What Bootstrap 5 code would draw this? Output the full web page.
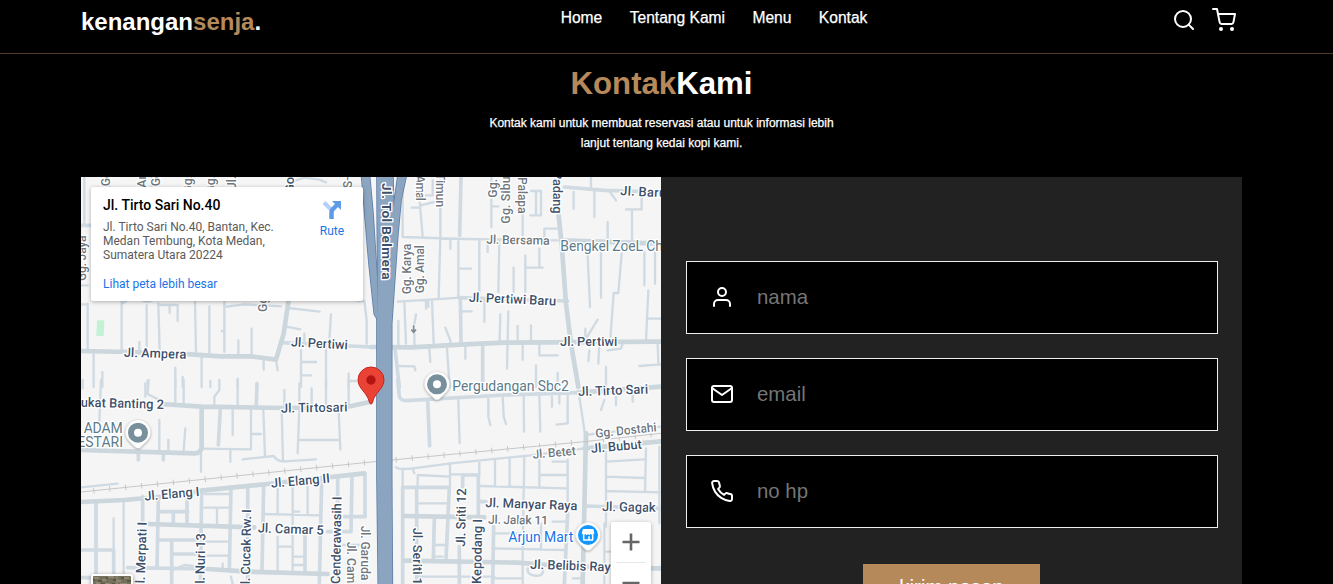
<!DOCTYPE html>
<html lang="id">
<head>
<meta charset="utf-8">
<meta name="viewport" content="width=device-width, initial-scale=1">
<title>Kenangan Senja</title>
<link rel="stylesheet" href="https://cdn.jsdelivr.net/npm/bootstrap@5.3.0/dist/css/bootstrap.min.css">
<style>
  body { background:#000; color:#fff; font-family:"Liberation Sans", Arial, sans-serif; height:100vh; overflow:hidden; }
  .topbar { height:54px; padding:0 91px 0 81px; border-bottom:1px solid #513c28; }
  .brand { font-size:24px; line-height:28px; font-weight:700; margin-top:8px; color:#fff; text-decoration:none; }
  .accent { color:#b6895b; }
  .menu { gap:27.400px; margin:8px 5px 0 0; }
  .menu a { color:#fff; text-decoration:none; font-size:15.600px; line-height:19px; -webkit-text-stroke:.25px #fff; }
  .tools { gap:16px; margin:8px 6px 0 0; }
  .feather { width:24px; height:24px; fill:none; stroke:#fff; stroke-width:2; stroke-linecap:round; stroke-linejoin:round; flex:none; display:block; }
  .contact { padding:0 91px 0 81px; }
  .contact h2 { font-size:31.200px; line-height:36px; font-weight:700; margin:12px 0 0; }
  .intro { font-size:12px; line-height:20px; width:360px; margin:11px auto 24px; -webkit-text-stroke:.25px #fff; }
  .panels { min-height:0; overflow:hidden; }
  .mapbox { width:580px; flex:none; position:relative; overflow:hidden; background:#f5f5f5; font-family:Roboto, sans-serif; }
  .mapbox > svg { width:580px; height:407px; display:block; }
  .place { position:absolute; left:10px; top:10px; width:272px; height:114px; padding:10px 12px; background:#fff; border-radius:2px; box-shadow:0 1px 4px rgba(0,0,0,.3); }
  .place h3 { font-size:14px; line-height:17px; font-weight:500; color:#000; margin:0 0 6px; }
  .place p { font-size:12px; line-height:14px; color:#5b5b5b; margin:0 0 15px; width:185px; }
  .place a { font-size:12px; line-height:14px; color:#1a73e8; text-decoration:none; display:block; }
  .place .route { position:absolute; left:226px; top:13px; width:30px; text-align:center; }
  .route svg { display:block; margin:0 auto 4px; }
  .zoomer { position:absolute; left:530px; top:345px; width:40px; height:81px; background:#fff; border-radius:2px; box-shadow:0 1px 4px rgba(0,0,0,.3); }
  .zoomer svg { display:block; }
  .aerial { position:absolute; left:10px; top:397px; width:42px; height:42px; border:2px solid #fff; border-radius:3px; box-shadow:0 1px 4px rgba(0,0,0,.4); overflow:hidden; }
  .aerial svg { display:block; }
  .formside { background:#222; padding:84px 24px 0 25px; }
  .field { flex:none; height:73px; border:1px solid #eee; background:#000; padding-left:23px; margin-bottom:24px; }
  .field .feather { margin-bottom:1.500px; }
  .field input { background:none; border:0; outline:0; color:#fff; font-size:20.400px; padding:0; margin-left:23px; }
  .field input::placeholder { color:#757575; opacity:1; }
  .send { flex:none; background:#b6895b; color:#fff; border:0; border-radius:0; font-size:20.400px; line-height:24px; width:177px; padding:11px 0 13px; margin:12px 1px 0 0; }
  .rd path { fill:none; stroke:#d0dae2; stroke-linecap:round; stroke-linejoin:round; }
  .rd .t { stroke-width:7; } .rd .m { stroke-width:11; } .rd .l { stroke-width:14; stroke:#cbd6dd; }
  .rail { fill:none; stroke:#c4c7c9; stroke-width:3; }
  .tick { fill:none; stroke:#c4c7c9; stroke-width:17; stroke-dasharray:3 45; }
  .lb text { font-size:39px; font-weight:500; fill:#3e516b; stroke:#fff; stroke-width:8; paint-order:stroke; stroke-linejoin:round; }
  .lb .n { fill:#6f767d; font-size:37px; }
  .lb .p { fill:#5c7b8a; font-weight:400; font-size:42px; }
  .lb .toll { font-size:41px; font-weight:700; }
</style>
</head>
<body class="d-flex flex-column">
<header class="topbar d-flex align-items-start justify-content-between flex-shrink-0">
  <a class="brand" href="#">kenangan<span class="accent">senja</span>.</a>
  <nav class="menu d-flex">
    <a href="#">Home</a><a href="#">Tentang Kami</a><a href="#">Menu</a><a href="#">Kontak</a>
  </nav>
  <div class="tools d-flex">
    <svg class="feather" viewBox="0 0 24 24"><circle cx="11" cy="11" r="8"/><path d="M21 21l-4.350-4.350"/></svg>
    <svg class="feather" viewBox="0 0 24 24"><circle cx="9" cy="21" r="1"/><circle cx="20" cy="21" r="1"/><path d="M1 1h4l2.680 13.390a2 2 0 0 0 2 1.610h9.720a2 2 0 0 0 2-1.610L23 6H6"/></svg>
  </div>
</header>

<main class="contact d-flex flex-column flex-grow-1 overflow-hidden">
  <h2 class="text-center"><span class="accent">Kontak</span>Kami</h2>
  <p class="intro text-center">Kontak kami untuk membuat reservasi atau untuk informasi lebih lanjut tentang kedai kopi kami.</p>
  <div class="panels d-flex flex-grow-1">
    <div class="mapbox">
      <svg viewBox="0 0 1740 1221">
        <!-- streets, one group per map quarter -->
        <g class="rd">
          <g>
            <path class="t" d="M10 0V140M85 0V30M212 0V30M320 0V30M400 0V30M640 12L670 2L715 8L735 16M20 380V515M0 382H20M0 325H20M122 375V520M122 380L135 373M180 368Q197 380 215 368M197 385V520M232 380L236 520M232 384H290V432M266 384V408M342 375L345 525M385 388V530M430 375V525M430 390L490 382L600 388M472 490V535M512 455V540M622 393L716 404M615 449L658 457M850 372L857 430V500M750 412L745 490M735 515V630M660 520V630M660 555H705M660 595H690M585 548L590 580M548 548V578M362 540V630M283 572V630M305 600V630M200 610V630M64 585V630M38 530V630M388 612V630M470 605V630M528 620V630M803 590V630M803 612H825M175 495V520M422 462h8M670 500V470M830 372H850"/>
            <path class="m" d="M600 497L870 510M0 145H30"/>
            <path class="l" d="M0 522L145 525L330 532L420 538H510L585 548L608 470L622 375"/>
          </g>
          <g transform="translate(870 0)">
            <path class="t" d="M95 0V180M140 0L155 180M150 85L190 75M122 92h25M185 10V55H165M208 0V180L203 360M95 180L280 186L560 190M238 190V215M262 190V360M262 275H300M325 190V345M385 190L382 345M361 0V150M365 88H382M455 100V175M480 42H510V115H478M495 42V112M520 180V155H560M350 200V225M505 215V272M463 235V345M463 272H515M428 272V345M608 45V95M670 45V120M660 0V30M715 42L735 70M812 45V97H765M783 97V190M710 135V185M650 235L657 390M690 215V362M752 230L742 348H728L718 485M820 225V325M852 215V320M832 340L825 490M832 425H870M80 374L270 362M100 375L105 500M183 370L188 500M165 370V395M172 370V390M82 432V505M130 470V505M135 412L130 440M223 452L238 490V500M272 403H302M340 365V435M388 412L386 490M412 403L408 575M440 447V490M480 445V490M645 485L680 428M643 455V490M175 515L178 555M228 515L236 630M283 505V545M455 500V548M505 500V535H560M655 520L652 552M685 500L682 560M710 520L750 515L755 500M805 567L870 562M860 500L862 560M85 567L130 568L133 580M495 565V630M560 588V630M705 570V630"/>
            <path class="m" d="M270 0L266 175M335 500V630M265 362L590 372M268 365L270 495M72 515L85 630M580 30L700 40L870 45"/>
            <path class="l" d="M0 510L120 511L280 502L400 497L870 494M560 90L572 200L585 380L600 500L622 630M570 190L870 200"/>
          </g>
          <g transform="translate(0 609)">
            <path class="t" d="M455 85V165M510 85V208L365 206M510 162H540M547 90L552 228M602 90L606 243M655 85L650 220M655 180H775M773 90L778 208M485 238L578 228Q590 246 610 244L705 238M235 120V210M313 145L308 210M262 180V210M360 220V275M448 210V245M0 322L110 311M60 0L55 125M5 0V25M193 10V50M203 0L200 42L235 60M283 0V70M308 0V70M415 0V30L400 50V75M470 0V80M610 30V80M655 10V80M692 25V80M803 0V78M735 0V75M128 365V612M98 415V510M370 342H445M370 383H445M408 385V435M370 485H445M370 527H445M548 402L720 406M590 325V400M635 320V575M680 315V402M635 530H670M635 555H670M590 470V575M590 500H635M450 590L455 612M275 570L310 555L355 560M635 395h20M425 550V570M780 495H850"/>
            <path class="m" d="M45 365V612M0 510H98V612M185 350V430M232 360L228 565M362 335L358 612M450 322L445 570M500 318V612M548 315L543 570M722 300L715 612M813 290L810 455H740M770 295V612M852 285V410H790M235 395H320M318 350V430M277 395V430M232 480H360M272 480V612M272 522H360M140 563L380 567M672 460V575M418 85L412 195M172 215V240M247 220V240M528 10L526 75M0 593H32"/>
            <path class="l" d="M240 72L360 80L620 84L800 80L870 65M0 210L340 220Q360 220 362 200V80M0 366L130 360L300 345L360 332L560 312L850 280M200 432L520 442M380 567L500 575L740 582"/>
          </g>
          <g transform="translate(870 609)">
            <path class="t" d="M75 262Q85 270 125 265L240 250L480 226L640 205M125 265L130 280M625 50L643 170M643 165L680 160L870 140M262 60L266 190M95 270V320M140 285L235 290M237 250V320M237 283H275M325 242V285M328 318L585 325M372 238V315M416 232V318M460 228L455 510V612M505 225V320M505 285H585M590 240V400M545 245h45M705 215V440M705 245L820 238M825 205L822 335M705 290L820 294M705 333L870 337M140 370H230M140 290V325M195 495H225M195 530H215M140 590H370M365 505L580 510M510 430V510M545 425H590M470 565Q468 590 505 587Q520 580 515 570M352 55V110L358 135M395 50L398 110L405 132M458 45L459 155M505 45L508 155M590 40V130L557 134M543 50V80M565 45V70M700 60L690 90M735 50V75M785 45V65M865 200V430M700 515H720M370 460H450M370 595H450M605 595H635M700 430V612"/>
            <path class="m" d="M80 0L85 50Q90 62 105 62L400 45L620 38M170 62L176 198M95 322H235L225 540M95 322V612M137 325V612M275 320V285H322V410M190 415L187 535M590 400L580 612M325 365H345M368 440L365 612M265 500V612M640 378L870 385"/>
            <path class="l" d="M620 38L870 20M640 205L870 184M645 160L635 612M100 408L340 412M100 542L440 548L530 555L720 562M780 565H870"/>
          </g>
        </g>
        <path d="M48 430H70L68 477H46Z" fill="#c3f1d5"/>
        <path class="rail" d="M0 945L870 855L1510 794L1740 769"/>
        <path class="tick" d="M37 941L870 855L1510 794L1740 769"/>
        <!-- toll road: outline first, then the joined carriageways -->
        <defs>
          <g id="toll">
            <path d="M-28 0H-4L6 110L18 300V425L10 412L-6 260Z"/>
            <path d="M18 0H66L68 90L80 0H105L90 70L80 180L62 440V900L64 1225H22L18 900V425L20 300Z"/>
          </g>
        </defs>
        <use href="#toll" x="870" fill="#8ba5c1" stroke="#5f7fa9" stroke-width="5"/>
        <use href="#toll" x="870" fill="#8ba5c1"/>
        <g class="lb">
          <text class="n" transform="translate(88 28) rotate(-90)">Gg.</text>
          <text class="n" transform="translate(196 32) rotate(-90)">Amal</text>
          <text class="n" transform="translate(238 28) rotate(-90)">Gg.</text>
          <text class="n" transform="translate(333 50) rotate(-90)">Gg.</text>
          <text class="n" transform="translate(402 50) rotate(-90)">Gg.</text>
          <text class="n" transform="translate(464 36) rotate(-90)">Jl.</text>
          <text transform="translate(638 48) rotate(-90)">Gog</text>
          <text class="n" transform="translate(812 34) rotate(-90)">S-</text>
          <text class="n" transform="translate(14 312) rotate(-90)" textLength="137">Gg. Jaya</text>
          <text class="n" transform="translate(557 405) rotate(-90)">Gg.</text>
          <text transform="translate(128 539) rotate(2)" textLength="188">Jl. Ampera</text>
          <text transform="translate(629 508) rotate(3)" textLength="171">Jl. Pertiwi</text>
          <g transform="translate(870 0)">
            <text class="toll" transform="translate(33 18) rotate(90)" textLength="290">Jl. Tol Belmera</text>
            <text class="n" transform="translate(136 -5) rotate(90)" textLength="77">Amal</text>
            <text class="n" transform="translate(195 -12) rotate(90)" textLength="102">Timun</text>
            <text class="n" transform="translate(378 62) rotate(-90)">Gg. S</text>
            <text class="n" transform="translate(418 140) rotate(-90)" textLength="152">Gg. Sibul</text>
            <text class="n" transform="translate(440 0) rotate(90)" textLength="110">Palapa</text>
            <text transform="translate(547 -18) rotate(90)" textLength="128">Padang</text>
            <text transform="translate(747 54) rotate(3)" textLength="138">Jl. Baru</text>
            <text class="n" transform="translate(346 200) rotate(1)" textLength="190">Jl. Bersama</text>
            <text class="p" transform="translate(568 223)" textLength="308">Bengkel ZoeL Ch</text>
            <text class="n" transform="translate(120 352) rotate(-90)" textLength="152">Gg. Karya</text>
            <text class="n" transform="translate(160 349) rotate(-90)" textLength="145">Gg. Amal</text>
            <text transform="translate(293 374) rotate(2.500)" textLength="262">Jl. Pertiwi Baru</text>
            <text transform="translate(567 507)" textLength="172">Jl. Pertiwi</text>
            <path d="M128 445V466M121 458L128 466L135 458" fill="none" stroke="#7d8b94" stroke-width="5"/>
          </g>
          <g transform="translate(0 609)">
            <text transform="translate(-1 80) rotate(1.500)" textLength="250">ukat Banting 2</text>
            <text class="p" transform="translate(8 159)" textLength="117">ADAM</text>
            <text class="p" transform="translate(-11 201)" textLength="137">ESTARI</text>
            <text transform="translate(600 98) rotate(-1)" textLength="200">Jl. Tirtosari</text>
            <text transform="translate(191 362) rotate(-5)" textLength="166">Jl. Elang I</text>
            <text transform="translate(571 323) rotate(-5)" textLength="177">Jl. Elang II</text>
            <text transform="translate(530 457) rotate(2)" textLength="198">Jl. Camar 5</text>
            <text transform="translate(190 632) rotate(-88)" textLength="206">Jl. Merpati I</text>
            <text transform="translate(370 632) rotate(-89)" textLength="172">Jl. Nuri 13</text>
            <text transform="translate(506 634) rotate(-89)" textLength="246">Jl. Cucak Rw. I</text>
            <text transform="translate(777 612) rotate(-89)" textLength="262">Cenderawasih I</text>
            <text class="n" transform="translate(798 485) rotate(90)" textLength="158">Jl. Camar</text>
            <text class="n" transform="translate(840 437) rotate(90)" textLength="164">Jl. Garuda</text>
          </g>
          <g transform="translate(870 609)">
            <text class="p" transform="translate(244 33)" textLength="350">Pergudangan Sbc2</text>
            <text transform="translate(622 48) rotate(-2)" textLength="210">Jl. Tirto Sari</text>
            <text class="n" transform="translate(674 173) rotate(-6)" textLength="185">Gg. Dostahi</text>
            <text class="n" transform="translate(486 236) rotate(-5)" textLength="130">Jl. Betet</text>
            <text transform="translate(661 219) rotate(-5)" textLength="153">Jl. Bubut</text>
            <text transform="translate(126 443) rotate(90)" textLength="172">Jl. Seriti 1</text>
            <text transform="translate(282 500) rotate(-89)" textLength="175">Jl. Sriti 12</text>
            <text transform="translate(330 612) rotate(-89)" textLength="195">Kepodang I</text>
            <text transform="translate(343 381) rotate(2)" textLength="276">Jl. Manyar Raya</text>
            <text class="n" transform="translate(351 431) rotate(1)" textLength="180">Jl. Jalak 11</text>
            <text class="p" transform="translate(412 486)" textLength="195" style="fill:#1a73e8">Arjun Mart</text>
            <text transform="translate(477 566) rotate(2)" textLength="242">Jl. Belibis Ray</text>
            <text transform="translate(693 393) rotate(1)" textLength="161">Jl. Gagak</text>
          </g>
        </g>
        <!-- place pins -->
        <defs><path id="drop" d="M0 -38A38 38 0 0 1 38 0C38 20 20 30 10 42Q0 52 -10 42C-20 30 -38 20 -38 0A38 38 0 0 1 0 -38Z"/></defs>
        <g fill="#fff" style="filter:drop-shadow(0 2px 3px rgba(0,0,0,.4))">
          <use href="#drop" x="171" y="767"/>
          <use href="#drop" x="1068" y="622"/>
          <use href="#drop" x="1521" y="1074"/>
        </g>
        <circle cx="171" cy="767" r="21" fill="#fff" stroke="#78909c" stroke-width="18"/>
        <circle cx="1068" cy="622" r="21" fill="#fff" stroke="#78909c" stroke-width="18"/>
        <circle cx="1521" cy="1074" r="30" fill="#1197ff"/>
        <path d="M1506 1056H1537L1540 1069Q1535 1076 1529 1071Q1525 1077 1521 1071Q1517 1077 1513 1071Q1507 1076 1502 1069Z" fill="#fff"/>
        <path d="M1508 1072V1089H1535V1072M1524 1078V1088" fill="none" stroke="#fff" stroke-width="4.500" stroke-linejoin="round"/>
        <path d="M870 570A39 39 0 0 1 909 609C909 635 880 648 875 675Q870 688 865 675C860 648 831 635 831 609A39 39 0 0 1 870 570Z" fill="#ea4335" stroke="#c5221f" stroke-width="3"/>
        <circle cx="870" cy="609" r="14" fill="#b31412"/>
      </svg>
      <div class="place">
        <h3>Jl. Tirto Sari No.40</h3>
        <p>Jl. Tirto Sari No.40, Bantan, Kec.<br>Medan Tembung, Kota Medan,<br>Sumatera Utara 20224</p>
        <a href="#">Lihat peta lebih besar</a>
        <a class="route" href="#">
          <svg width="20" height="20" viewBox="0 0 20 20" fill="none"><path d="M2 2.500L10 10.500" stroke="#b3d0f8" stroke-width="4"/><path d="M9.500 19V12.500Q9.500 10.500 11 9L15.500 4.500" stroke="#5f9ae6" stroke-width="4.500"/><path d="M10 1H19V10Z" fill="#5f9ae6"/></svg>
          Rute</a>
      </div>
      <div class="aerial">
        <svg width="38" height="38"><rect width="38" height="38" fill="#75705c"/>
          <path d="M1 2h5M9 4h4M15 1h6M24 5h4M31 2h5M3 7h4M12 8h5M27 8h7" stroke="#91886f" stroke-width="2"/>
          <path d="M5 5h4M13 2h2M20 4h4M28 2h3M8 8h4M19 8h3M34 5h4M0 4h2" stroke="#555943" stroke-width="2"/>
          <path d="M24 0v9" stroke="#968671" stroke-width="1.500"/></svg>
      </div>
      <div class="zoomer">
        <svg width="40" height="81"><path d="M11.500 20H28.500M20 11.500V28.500M11.500 61H28.500" stroke="#666" stroke-width="2.600"/><path d="M5 40.500H35" stroke="#e6e6e6"/></svg>
      </div>
    </div>
    <form class="formside flex-grow-1 d-flex flex-column">
      <div class="field d-flex align-items-center">
        <svg class="feather" viewBox="0 0 24 24"><path d="M20 21v-2a4 4 0 0 0-4-4H8a4 4 0 0 0-4 4v2"/><circle cx="12" cy="7" r="4"/></svg>
        <input type="text" placeholder="nama">
      </div>
      <div class="field d-flex align-items-center">
        <svg class="feather" viewBox="0 0 24 24"><path d="M4 4h16c1.100 0 2 .9 2 2v12c0 1.100-.9 2-2 2H4c-1.100 0-2-.9-2-2V6c0-1.100.9-2 2-2z"/><path d="M22 6l-10 7L2 6"/></svg>
        <input type="text" placeholder="email">
      </div>
      <div class="field d-flex align-items-center">
        <svg class="feather" viewBox="0 0 24 24"><path d="M22 16.920v3a2 2 0 0 1-2.180 2 19.790 19.790 0 0 1-8.630-3.070 19.500 19.500 0 0 1-6-6 19.790 19.790 0 0 1-3.070-8.670A2 2 0 0 1 4.110 2h3a2 2 0 0 1 2 1.720 12.840 12.840 0 0 0 .7 2.810 2 2 0 0 1-.45 2.110L8.090 9.910a16 16 0 0 0 6 6l1.270-1.270a2 2 0 0 1 2.110-.45 12.840 12.840 0 0 0 2.810.7A2 2 0 0 1 22 16.920z"/></svg>
        <input type="text" placeholder="no hp">
      </div>
      <button type="button" class="send align-self-center">kirim pesan</button>
    </form>
  </div>
</main>
<script src="https://cdn.jsdelivr.net/npm/bootstrap@5.3.0/dist/js/bootstrap.bundle.min.js"></script>
</body>
</html>
